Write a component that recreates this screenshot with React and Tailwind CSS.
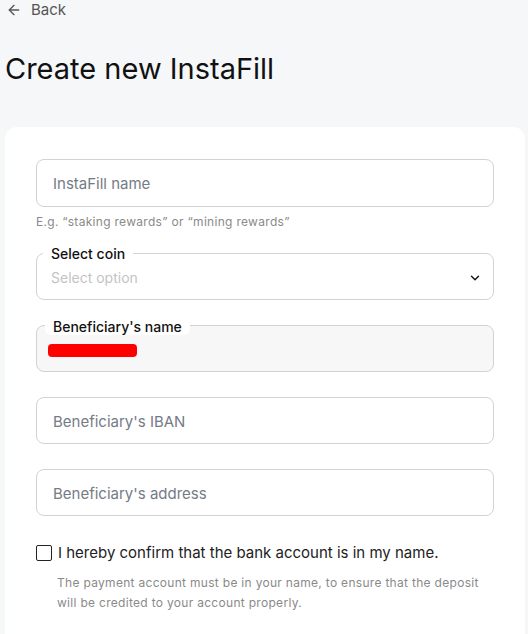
import React from 'react';
import { ArrowLeft, ChevronDown } from 'lucide-react';

const font = { fontFamily: 'Inter, "Open Sans", sans-serif' };

const TextField = ({ placeholder, className = '' }) => (
  <div className={`h-[47px] rounded-lg border border-[#d2d2d2] bg-white flex items-center pl-4 ${className}`}>
    <span className="text-[15px] text-[#757b85] mt-[3px]">{placeholder}</span>
  </div>
);

const App = () => {
  return (
    <div className="min-h-[634px] bg-[#f6f7f9] text-[#111]" style={font}>
      <div className="h-5 flex items-center gap-[9px] pl-[6px] text-[#555]">
        <ArrowLeft className="w-4 h-4" strokeWidth={2} />
        <span className="text-[15px]">Back</span>
      </div>

      <h1 className="mt-[31px] ml-[5px] text-[29px] leading-9 font-normal">Create new InstaFill</h1>

      <div className="mt-[40px] ml-[5px] w-[520px] bg-white rounded-t-xl pt-8 pl-[31px] pr-[31px] pb-6">
        <div className="w-[458px]">
          <div className="h-12 rounded-lg border border-[#d2d2d2] flex items-center pl-4">
            <span className="text-[15px] text-[#757b85] mt-[2px]">InstaFill name</span>
          </div>
          <p className="mt-[7px] text-xs leading-4 tracking-[0.3px] text-[#8a8a8a]">E.g. “staking rewards” or “mining rewards”</p>

          <div className="relative mt-[23px] h-[47px] rounded-lg border border-[#d2d2d2] flex items-center pl-[14px] pr-[11px] pt-[2px]">
            <span className="absolute left-[6px] -top-[8px] px-2 bg-white text-sm font-medium leading-4 text-[#111]">Select coin</span>
            <span className="flex-1 text-sm text-[#c4c4c4] mt-[1px]">Select option</span>
            <ChevronDown className="w-[14px] h-[14px] text-[#111]" strokeWidth={2.4} />
          </div>

          <div className="relative mt-[25px] h-[47px] rounded-lg border border-[#d2d2d2] bg-[#f7f7f7] flex items-center pl-[11px]">
            <span className="absolute left-[8px] -top-[7px] px-2 bg-white rounded-md text-sm font-medium leading-4 text-[#111]">Beneficiary's name</span>
            <span className="mt-[3px] w-[89px] h-[13px] rounded-[4px] bg-[#ff0000]"></span>
          </div>

          <TextField placeholder="Beneficiary's IBAN" className="mt-[25px]" />
          <TextField placeholder="Beneficiary's address" className="mt-[25px]" />

          <label className="mt-[26px] flex items-center gap-[6px]">
            <span className="w-4 h-4 rounded-[2px] border-[1.5px] border-[#222] bg-white"></span>
            <span className="text-[15px] text-[#222]">I hereby confirm that the bank account is in my name.</span>
          </label>
          <p className="mt-[8px] pl-[21px] text-xs leading-5 tracking-[0.3px] text-[#8a8a8a]">
            The payment account must be in your name, to ensure that the deposit<br />
            will be credited to your account properly.
          </p>
        </div>
      </div>
    </div>
  );
};

export default App;
